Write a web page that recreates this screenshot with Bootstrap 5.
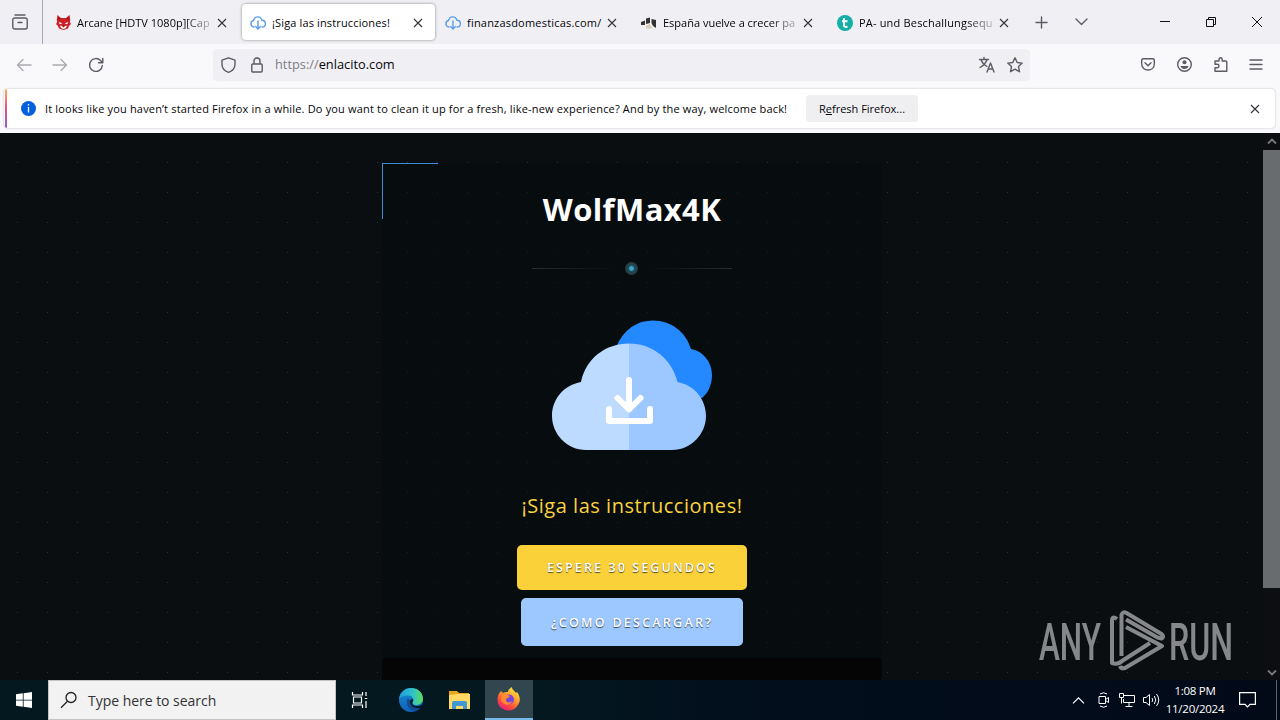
<!DOCTYPE html>
<html lang="es">
<head>
    <meta charset="UTF-8">
    <meta name="viewport" content="width=device-width, initial-scale=1.0">
    <title>¡Siga las instrucciones!</title>
    <link rel="stylesheet" href="https://cdn.jsdelivr.net/npm/bootstrap@5.3.0/dist/css/bootstrap.min.css">
    <style>
        body {
            width: 1280px;
            height: 720px;
            overflow: hidden;
            font-family: 'Open Sans', 'Noto Sans', sans-serif;
            font-size: 11px;
            color: #050508;
            background: #f9f9fb;
        }
        svg {
            display: block;
            flex: none;
            overflow: visible;
        }
        .line-icon {
            fill: none;
            stroke: #5b5b66;
            stroke-width: 1.4;
            stroke-linecap: round;
            stroke-linejoin: round;
        }
        .close-icon {
            fill: none;
            stroke: #33333b;
            stroke-width: 1.1;
        }
        /* tabs */
        .tab-strip {
            height: 44px;
            background: #f0f0f4;
        }
        .view-btn {
            width: 43px;
            border-right: 1px solid #a9a9b3;
            padding-left: 12px;
        }
        .tab-item {
            width: 196px;
            height: 44px;
            padding: 1px 13px 0 13px;
        }
        .tab-item .tab-text {
            width: 133px;
            margin-left: 6px;
            white-space: nowrap;
            line-height: 20px;
        }
        .tab-fade {
            -webkit-mask-image: linear-gradient(90deg, #000 80%, rgba(0, 0, 0, .25) 100%);
            mask-image: linear-gradient(90deg, #000 80%, rgba(0, 0, 0, .25) 100%);
        }
        .tab-item .tab-x {
            margin-left: 8px;
        }
        .tab-current {
            width: 193px;
            height: 36px;
            margin: 0 2px 0 3px;
            padding: 1px 13px 0 8px;
            background: #fff;
            border-radius: 4px;
            box-shadow: 0 0 3px rgba(0, 0, 0, .45);
        }
        .spaced-s {
            letter-spacing: .18px;
        }
        .spaced-m {
            letter-spacing: .2px;
        }
        /* toolbar */
        .nav-tools {
            height: 44px;
            padding-left: 16px;
            padding-bottom: 3px;
        }
        .url-box {
            width: 817px;
            height: 32px;
            margin-left: 110px;
            padding: 0 7px 0 8px;
            background: #f0f0f4;
            border-radius: 4px;
            font-size: 12.8px;
        }
        .url-box .scheme {
            color: #7c7c85;
        }
        .url-text {
            margin-left: 12px;
            padding-top: 1px;
        }
        .notice-wrap {
            height: 45px;
            padding: 1px 5px 5px 4px;
        }
        .notice {
            height: 39px;
            background: #fff;
            border-radius: 4px;
            box-shadow: 0 0 2px rgba(58, 57, 68, .35);
            overflow: hidden;
        }
        .notice-bar {
            width: 2px;
            height: 39px;
            margin-left: 1px;
            background: linear-gradient(#ffb05a, #e2557b 45%, #9059c9);
        }
        .notice-text {
            width: 742px;
            margin-left: 9px;
            padding-top: 1px;
            letter-spacing: .172px;
        }
        .refresh-btn {
            width: 112px;
            height: 27px;
            margin-left: 19px;
            background: #efeff2;
            border-radius: 4px;
            line-height: 28px;
        }
        /* page */
        .page-view {
            height: 547px;
            background: #0b0e11;
        }
        .dot-field {
            width: 1262px;
            padding-top: 30px;
            background: radial-gradient(circle at 17.5px 30.5px, #2b3236 0 1px, transparent 1.4px) 0 0 / 30px 30px;
        }
        .panel-box {
            width: 500px;
            height: 517px;
            margin-left: 382px;
            background: rgba(4, 9, 12, .5);
            border: 0;
        }
        .corner {
            width: 56px;
            height: 56px;
            margin-bottom: -56px;
            border-top: 1px solid #3f8bd8;
            border-left: 1px solid #3f8bd8;
        }
        .site-name {
            height: 40px;
            margin: 26px 0 0;
            color: #fff;
            font-size: 31px;
            font-weight: 700;
            line-height: 40px;
            letter-spacing: .4px;
        }
        .subtitle {
            margin: 41px 0 0;
            height: 30px;
            color: #fbd33c;
            font-size: 20px;
            font-weight: 500;
            line-height: 30px;
            letter-spacing: .53px;
        }
        .action-btn {
            color: #fff;
            border: 0;
            border-radius: 5px;
            font-size: 12.5px;
            font-weight: 600;
            letter-spacing: 2.1px;
            text-shadow: 0 1px 1px rgba(0, 0, 0, .65);
            padding: 2px 0 0;
        }
        .btn-wait {
            width: 230px;
            height: 45px;
            margin-top: 24px;
            background: #fbd13a;
        }
        .btn-how {
            width: 222px;
            height: 48px;
            margin-top: 8px;
            background: #9cc8ff;
            letter-spacing: 2.25px;
        }
        .panel-foot {
            height: 22px;
            margin-top: 12px;
            background: #050505;
        }
        .scroll-track {
            width: 17px;
            margin-left: 1px;
            background: #0c0e11;
        }
        .scroll-thumb {
            width: 17px;
            height: 438px;
            background: #696c6f;
        }
        .watermark {
            position: absolute;
            left: 1030px;
            top: 600px;
        }
        /* taskbar */
        .task-bar {
            height: 40px;
            background: linear-gradient(90deg, #041820 0, #041820 540px, #020e1c 760px, #020a18 1280px);
            color: #fff;
        }
        .search-box {
            width: 288px;
            height: 40px;
            padding-left: 12px;
            background: #f2f2f2;
            border: 1px solid #c4c4c4;
            color: #333;
            font-size: 14px;
            letter-spacing: -.03px;
        }
        .task-app {
            width: 48px;
            height: 40px;
        }
        .task-app.running {
            background: #31464f;
            border-bottom: 2px solid #76b9ed;
        }
        .task-clock {
            width: 62px;
            font-size: 11.5px;
            line-height: 18px;
            white-space: nowrap;
            letter-spacing: -.25px;
        }
    </style>
</head>

<body class="d-flex flex-column">
    <!-- tab strip -->
    <div class="tab-strip d-flex align-items-center">
        <div class="view-btn h-100 d-flex align-items-center">
            <svg class="line-icon" width="16" height="16" viewBox="0 0 16 16"><path d="M3 1h10M2.600 4h10.800a1.800 1.800 0 0 1 1.800 1.800v7.200a2 2 0 0 1-2 2H2.800a2 2 0 0 1-2-2V5.800A1.800 1.800 0 0 1 2.600 4zM6 8.500h4"/></svg>
        </div>
        <div class="tab-item d-flex align-items-center">
            <svg width="15" height="15" viewBox="0 0 15 15"><path fill="#cf2027" d="M1.500 0l3.500 3h5l3.500-3 .8 5-.5 2L15 9l-2 2-1 2.500-4.500 1.500L3 13.500 2 11 0 9l1.200-2-.5-2z"/><path fill="#fff" d="M3.500 7l2.500 1.500-1 .8-2-.8zM11.500 7L9 8.500l1 .8 2-.8zM4 10.500l2 .5 1.500 1.500L9 11l2-.5-1 2.500-2.500 1L5 13z"/><path fill="#5c1114" d="M2.500 2l1.500 1.800-1.500 1.500zM12.500 2L11 3.800l1.500 1.500zM6.700 10.500h1.600l-.8 1.500z"/></svg>
            <div class="tab-text tab-fade">Arcane [HDTV 1080p][Cap</div>
            <svg class="tab-x close-icon" width="8" height="8" viewBox="0 0 8 8"><path d="M0 0l8 8M8 0L0 8"/></svg>
        </div>
        <div class="tab-item tab-current d-flex align-items-center">
            <svg width="16" height="14" viewBox="0 0 16 14" fill="none" stroke="#5b9dec" stroke-width="1.400"><path d="M4.500 11H4a3.300 3.300 0 0 1-.5-6.500C4.500 0 10.500-.5 12 4.300 16.500 4.500 16.500 11 12 11h-.5M8 4.500V13M5.300 10.300L8 13l2.700-2.700"/></svg>
            <div class="tab-text" style="letter-spacing:.14px">¡Siga las instrucciones!</div>
            <svg class="tab-x close-icon ms-auto" width="8" height="8" viewBox="0 0 8 8"><path d="M0 0l8 8M8 0L0 8"/></svg>
        </div>
        <div class="tab-item d-flex align-items-center ps-2">
            <svg width="16" height="14" viewBox="0 0 16 14" fill="none" stroke="#5b9dec" stroke-width="1.400"><path d="M4.500 11H4a3.300 3.300 0 0 1-.5-6.500C4.500 0 10.500-.5 12 4.300 16.500 4.500 16.500 11 12 11h-.5M8 4.500V13M5.300 10.300L8 13l2.700-2.700"/></svg>
            <div class="tab-text spaced-m">finanzasdomesticas.com/</div>
            <svg class="tab-x close-icon" width="8" height="8" viewBox="0 0 8 8"><path d="M0 0l8 8M8 0L0 8"/></svg>
        </div>
        <div class="tab-item d-flex align-items-center ps-2">
            <svg width="16" height="12" viewBox="0 0 16 12"><path fill="#333" d="M0 5l4-1.500V8H0zM5 1.500l4-1V6L5 7zM10.500 2l4.500 1v8l-3-2-1.500-3z"/><path fill="#d9cdb7" d="M5 9l3.500-2 3 4.500H5z"/></svg>
            <div class="tab-text tab-fade">España vuelve a crecer par</div>
            <svg class="tab-x close-icon" width="8" height="8" viewBox="0 0 8 8"><path d="M0 0l8 8M8 0L0 8"/></svg>
        </div>
        <div class="tab-item d-flex align-items-center ps-2">
            <svg width="16" height="16" viewBox="0 0 16 16"><circle cx="8" cy="8" r="8" fill="#12b0a6"/><path fill="none" stroke="#fff" stroke-width="2" d="M7 3v7.500q0 1.800 3.500 1.300M5 6.300h5.500"/></svg>
            <div class="tab-text tab-fade spaced-s">PA- und Beschallungsequi</div>
            <svg class="tab-x close-icon" width="8" height="8" viewBox="0 0 8 8"><path d="M0 0l8 8M8 0L0 8"/></svg>
        </div>
        <div class="d-flex align-items-center flex-grow-1 pe-3">
            <svg class="line-icon" style="margin-left:11px" width="11" height="11" viewBox="0 0 11 11"><path d="M5.500 0v11M0 5.500h11"/></svg>
            <svg class="line-icon" style="margin-left:29px" width="11" height="6" viewBox="0 0 11 6"><path d="M0 0l5.500 5.500L11 0"/></svg>
            <svg class="ms-auto" width="10" height="10" viewBox="0 0 10 10"><path stroke="#111" d="M0 4.500h10"/></svg>
            <svg style="margin-left:36px" width="10" height="10" viewBox="0 0 10 10" fill="none" stroke="#111"><path d="M.5 2.500h7v7h-7zM2.500 2.500v-2h7v7h-2"/></svg>
            <svg style="margin-left:36px;margin-right:2px" width="10" height="10" viewBox="0 0 10 10" stroke="#111"><path d="M0 0l10 10M10 0L0 10"/></svg>
        </div>
    </div>

    <!-- address bar -->
    <div class="nav-tools d-flex align-items-center">
        <svg class="line-icon opacity-50" width="16" height="14" viewBox="0 0 16 14"><path d="M15 7H1.500M7 1.500L1.500 7 7 12.500"/></svg>
        <svg class="line-icon opacity-50" style="margin-left:20px" width="16" height="14" viewBox="0 0 16 14"><path d="M1 7h13.500M9 1.500L14.500 7 9 12.500"/></svg>
        <svg class="line-icon" style="margin-left:21px" width="14" height="14" viewBox="0 0 14 14"><path d="M13.300 7.500A6.400 6.400 0 1 1 11.500 2.500L13.500 4.500M13.800.5v4.300H9.500"/></svg>
        <div class="url-box d-flex align-items-center">
            <svg class="line-icon" width="15" height="16" viewBox="0 0 15 16"><path d="M7.500.8l6.500 2.400v4C14 11 11 14 7.500 15.300 4 14 1 11 1 7.200v-4z"/></svg>
            <svg class="line-icon" style="margin-left:15px" width="12" height="16" viewBox="0 0 12 16"><path d="M1.800 7h8.400a1 1 0 0 1 1 1v6a1 1 0 0 1-1 1H1.800a1 1 0 0 1-1-1V8a1 1 0 0 1 1-1zM3 7V4a3 3 0 0 1 6 0v3"/></svg>
            <div class="url-text"><span class="scheme">https://</span>enlacito.com</div>
            <svg class="line-icon ms-auto" width="16" height="16" viewBox="0 0 16 16"><path d="M.5 2.500h9M5 .5v2M2 2.500c1 3.500 3.500 5.500 6 7M8 2.500C7 6 4.500 8.500 1 10.500M8 15l3.500-9L15 15M9.300 12h4.500"/></svg>
            <svg class="line-icon" style="margin-left:12px" width="16" height="16" viewBox="0 0 16 16"><path d="M8 .8l2.200 4.700 5 .6-3.700 3.500 1 5.100L8 12.200l-4.500 2.500 1-5.100L.8 6.100l5-.6z"/></svg>
        </div>
        <svg class="line-icon" style="margin-left:111px" width="14" height="13" viewBox="0 0 14 13"><path d="M2 .8h10a1.300 1.300 0 0 1 1.300 1.300V6c0 8-12.600 8-12.600 0V2.100A1.300 1.300 0 0 1 2 .8zM4 4.800l3 2.900 3-2.900"/></svg>
        <svg class="line-icon" style="margin-left:22px" width="15" height="15" viewBox="0 0 15 15"><circle cx="7.500" cy="7.500" r="6.800"/><circle cx="7.500" cy="5.300" r="2" fill="#5b5b66" stroke="none"/><path fill="#5b5b66" stroke="none" d="M3.500 9h8c-.5 4-7.500 4-8 0z"/></svg>
        <svg class="line-icon" style="margin-left:22px" width="14" height="15" viewBox="0 0 14 15"><path d="M1 14.300v-3.600h2.300a1.700 1.700 0 0 0 0-3.400H1V4h4V2.400a1.600 1.600 0 0 1 3.200 0V4h3.600a1 1 0 0 1 1 1v9.300z"/></svg>
        <svg class="line-icon" style="margin-left:22px" width="12" height="11" viewBox="0 0 12 11"><path d="M0 1h12M0 5.500h12M0 10h12"/></svg>
    </div>

    <!-- refresh notification -->
    <div class="notice-wrap">
        <div class="notice d-flex align-items-center">
            <div class="notice-bar"></div>
            <svg style="margin-left:14px" width="15" height="15" viewBox="0 0 15 15"><circle cx="7.500" cy="7.500" r="7.500" fill="#0560df"/><path stroke="#fff" stroke-width="1.300" d="M7.500 3v1.500M7.500 6v5.500"/></svg>
            <div class="notice-text text-nowrap">It looks like you haven’t started Firefox in a while. Do you want to clean it up for a fresh, like-new experience? And by the way, welcome back!</div>
            <div class="refresh-btn text-center">R<u>e</u>fresh Firefox...</div>
            <svg class="close-icon ms-auto me-3" width="8" height="8" viewBox="0 0 8 8"><path d="M0 0l8 8M8 0L0 8"/></svg>
        </div>
    </div>

    <!-- site -->
    <div class="page-view d-flex">
        <div class="dot-field">
            <div class="panel-box d-flex flex-column align-items-center">
                <div class="corner align-self-start"></div>
                <h1 class="site-name">WolfMax4K</h1>
                <svg style="margin-top:31px" width="200" height="16" viewBox="0 0 200 16">
                    <defs>
                        <linearGradient id="fadeRight"><stop offset="0" stop-color="#282e31"/><stop offset="1" stop-color="#282e31" stop-opacity="0"/></linearGradient>
                        <linearGradient id="fadeLeft"><stop offset="0" stop-color="#282e31" stop-opacity="0"/><stop offset="1" stop-color="#282e31"/></linearGradient>
                    </defs>
                    <rect y="8" width="85" height="1" fill="url(#fadeRight)"/>
                    <rect x="115" y="8" width="85" height="1" fill="url(#fadeLeft)"/>
                    <circle cx="99.500" cy="8.500" r="6.500" fill="#2b3c42"/>
                    <circle cx="99.500" cy="8.500" r="4.200" fill="#155064"/>
                    <circle cx="99.500" cy="8.500" r="2.400" fill="#45a5c3"/>
                </svg>
                <svg style="margin-top:44px" width="160" height="130" viewBox="0 0 160 130">
                    <path fill="#2488ff" d="M64 27C72 9 85 .5 101 .5c18 0 33 11.500 38 28.500 12 2 21 13 21 26 0 10-4 18-10 23L90 70z"/>
                    <path fill="#bddaff" d="M34 130C15 130 0 114 0 96c0-17 12-31 29-34C34 38 54 23.500 77 23.500l8 50L77 130z"/>
                    <path fill="#9cc8ff" d="M77 23.500c24 0 43 16 48.500 38.500C142 65 154 79 154 96c0 18-15 34-34 34H77z"/>
                    <path fill="none" stroke="#fff" stroke-width="6" stroke-linecap="round" stroke-linejoin="round" d="M77 60v29M65.500 78L77 89.500 88.500 78M57 89v12h41V89"/>
                </svg>
                <p class="subtitle">¡Siga las instrucciones!</p>
                <button class="btn action-btn btn-wait">ESPERE 30 SEGUNDOS</button>
                <button class="btn action-btn btn-how">¿COMO DESCARGAR?</button>
                <div class="panel-foot w-100"></div>
            </div>
        </div>
        <div class="scroll-track d-flex flex-column align-items-center">
            <svg style="margin:5px 0 6px" width="8" height="6" viewBox="0 0 8 6" fill="none" stroke="#777b7e" stroke-width="1.800"><path d="M0 5.500l4-4 4 4"/></svg>
            <div class="scroll-thumb"></div>
            <svg class="mt-auto mb-1" width="8" height="6" viewBox="0 0 8 6" fill="none" stroke="#777b7e" stroke-width="1.800"><path d="M0 .5l4 4 4-4"/></svg>
        </div>
    </div>

    <!-- taskbar -->
    <div class="task-bar d-flex align-items-center">
        <div class="task-app d-flex align-items-center justify-content-center">
            <svg width="16" height="16" viewBox="0 0 16 16" fill="#fff"><path d="M0 2.300L6.800 1.300v6.400H0zM7.600 1.200L16 0v7.700H7.600zM0 8.500h6.800v6.300L0 13.800zM7.600 8.500H16V16l-8.400-1.200z"/></svg>
        </div>
        <div class="search-box d-flex align-items-center">
            <svg width="16" height="16" viewBox="0 0 16 16" fill="none" stroke="#222" stroke-width="1.300"><circle cx="10" cy="5.500" r="5"/><path d="M6.500 9.200L0 15.700"/></svg>
            <div style="margin-left:11px">Type here to search</div>
        </div>
        <div class="task-app d-flex align-items-center justify-content-center">
            <svg width="16" height="16" viewBox="0 0 16 16" fill="none" stroke="#fff" stroke-width="1.200"><path d="M.5 0v3h10V0M.5 16v-3h10v3M1.500 5h8v6h-8zM14 0v4M14 9v7M12.800 6.500h2.500"/></svg>
        </div>
        <div class="task-app d-flex align-items-center justify-content-center" style="margin-left:3px">
            <svg width="24" height="24" viewBox="0 0 24 24">
                <defs>
                    <linearGradient id="edgeTop"><stop offset="0" stop-color="#1b9be0"/><stop offset=".6" stop-color="#32c5c6"/><stop offset="1" stop-color="#61dc57"/></linearGradient>
                    <linearGradient id="edgeLow" x2="0" y2="1"><stop offset="0" stop-color="#168bd3"/><stop offset="1" stop-color="#1062b8"/></linearGradient>
                </defs>
                <circle cx="12" cy="12" r="12" fill="url(#edgeLow)"/>
                <path fill="url(#edgeTop)" d="M0 11C1 4 6 0 12 0c7 0 12 5 12 10.500 0 4-3 6.500-7 6.500-3 0-4-1.500-3-3 2-3-1-6.500-5-6.500C5 7.500 1.500 9 0 11z"/>
                <path fill="#124a95" d="M9 10c-3 5 0 12 6 13 4-.5 6-2 7.500-4.500C16 21 11 18 11 13z"/>
                <path fill="#041820" d="M13.500 14c-.8 2 1 4 4 4 2 0 4-.5 5.500-1.500l2 1-1.500 1.500-1 .5C16 21.500 11 18 11 13.500c0-1.500 1-2.500 2-2.500 1.300 0 1.300 1.500.5 3z"/>
            </svg>
        </div>
        <div class="task-app d-flex align-items-center justify-content-center" style="margin-left:1px">
            <svg width="22" height="18" viewBox="0 0 22 18"><path fill="#e8a51f" d="M0 0h8l2 2h10v4H0z"/><path fill="#ffd866" d="M0 4l9-1h12v15H0z"/><path fill="#3f97d3" d="M3 18v-6q0-2 2-2h11q2 0 2 2v6h-4v-3H7v3z"/></svg>
        </div>
        <div class="task-app running d-flex align-items-center justify-content-center" style="margin-left:1px">
            <svg width="24" height="24" viewBox="0 0 24 24">
                <defs><linearGradient id="foxFire" x1=".8" y1="0" x2=".2" y2="1"><stop offset="0" stop-color="#fff044"/><stop offset=".35" stop-color="#ffa92e"/><stop offset=".7" stop-color="#ff4d3d"/><stop offset="1" stop-color="#e31587"/></linearGradient></defs>
                <path fill="url(#foxFire)" d="M4 4l2 2c1-1 3-1 5-1 0-2 2-4 4-5 0 3 2 3 4 6l1-1c3 4 4 9 1 13-4 7-13 7-18 2C0 16-1 9 4 4z"/>
                <circle cx="12" cy="12.500" r="5" fill="#7a45dc"/>
                <path fill="#ff8b2d" d="M5 8c3-2 5 0 8 1-1 2-4 2-4 4 0 3 4 3 6 1-1 5-9 5-11-1z"/>
            </svg>
        </div>
        <div class="d-flex align-items-center ms-auto">
            <svg width="11" height="7" viewBox="0 0 11 7" fill="none" stroke="#fff" stroke-width="1.200"><path d="M0 6.300L5.500.8 11 6.300"/></svg>
            <svg style="margin-left:14px" width="11" height="16" viewBox="0 0 11 16" fill="none" stroke="#fff"><path d="M1 4.500h6.500v7H1zM7.500 7.500l3-2v5l-3-2M2 2q3.500-2.500 7 0M2 14q3.500 2.500 7 0"/></svg>
            <svg style="margin-left:10px" width="16" height="14" viewBox="0 0 16 14" fill="none" stroke="#fff"><path d="M5 2.500h10.500v7H4.500V6M.5.500h4v4h-4zM2.500 4.500v6M10 9.500v4M6.500 13.500h7"/></svg>
            <svg style="margin-left:8px" width="17" height="14" viewBox="0 0 17 14" fill="none" stroke="#fff"><path d="M.5 4.500H3l3.500-3v11L3 9.500H.5zM9 5q1.500 2 0 4M11.300 3q3 4 0 8M13.500 1q4.500 6 0 12"/></svg>
            <div class="task-clock text-center" style="margin-left:4px">1:08 PM<br>11/20/2024</div>
            <svg style="margin-left:13px" width="17" height="16" viewBox="0 0 17 16" fill="none" stroke="#fff" stroke-width="1.200"><path d="M.6.6h15.800v11.800H11L8.500 15 6 12.400H.6z"/></svg>
            <div style="margin-left:20px;width:4px;height:40px;border-left:1px solid #5a6570"></div>
        </div>
    </div>

    <!-- watermark over the page -->
    <svg class="watermark" width="210" height="75" viewBox="0 0 210 75" opacity=".5">
        <g fill="#fff" font-family="Roboto, sans-serif" font-size="52" font-weight="500">
            <text x="9" y="60" textLength="62" lengthAdjust="spacingAndGlyphs">ANY</text>
            <text x="139" y="60" textLength="64" lengthAdjust="spacingAndGlyphs">RUN</text>
        </g>
        <path fill="none" stroke="#fff" stroke-width="4" stroke-linejoin="round" d="M87 19q-5-4-5 2v42q6 2 10-2l28-18M91.500 56V15q1-4 5-2l35 21q3 3 0 4.500l-4-1L96 19.500M96 27l36 19-37 22q-4 1-5-2"/>
    </svg>

    <script src="https://cdn.jsdelivr.net/npm/bootstrap@5.3.0/dist/js/bootstrap.bundle.min.js"></script>
</body>
</html>
